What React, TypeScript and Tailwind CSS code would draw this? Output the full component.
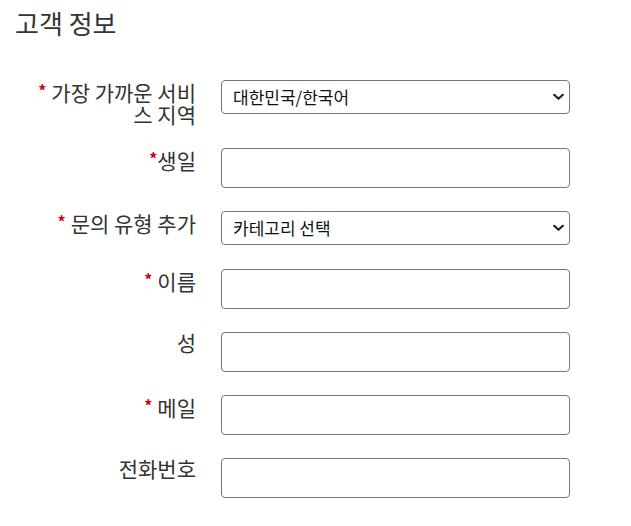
import React from "react";

const font = { fontFamily: '"Noto Sans CJK KR", "Noto Sans", sans-serif' };

function Chevron() {
  return (
    <svg width="11" height="7" viewBox="0 0 11 7" className="pointer-events-none absolute right-[6px] top-1/2 -translate-y-1/2">
      <path d="M1.2 1.2 L5.5 5.3 L9.8 1.2" fill="none" stroke="#222" strokeWidth="2.2" strokeLinecap="round" strokeLinejoin="round" />
    </svg>
  );
}

function Row({ label, req, tight, select, children }: { label: React.ReactNode; req?: boolean; tight?: boolean; select?: boolean; children: React.ReactNode }) {
  return (
    <div className={`flex items-start ${select ? "mb-[24px]" : "mb-[23px]"}`}>
      <div className="w-[170px] shrink-0 text-right text-[21px] leading-[22px] text-[#333] mt-[-1px]">
        {req && (
          <span className={`text-[#d0021b] text-[16px] align-[4px] font-bold ${tight ? "mr-0" : "mr-[5px]"}`}>*</span>
        )}
        {label}
      </div>
      <div className="ml-[25px] w-[349px]">{children}</div>
    </div>
  );
}

function TextBox() {
  return <input type="text" className="block w-full h-[40px] rounded-[4px] border border-[#767676] bg-white px-3 text-[17px] outline-none" />;
}

function SelectBox({ value }: { value: string }) {
  return (
    <div className="relative">
      <select defaultValue={value} className="block w-full h-[34px] appearance-none rounded-[4px] border border-[#767676] bg-white pl-[11px] pr-6 text-[17px] text-[#111] outline-none">
        <option>{value}</option>
      </select>
      <Chevron />
    </div>
  );
}

export default function App() {
  return (
    <div className="w-[631px] h-[526px] bg-white overflow-hidden pl-[15px] pt-[6px]" style={font}>
      <h2 className="text-[26px] leading-[34px] text-[#333] font-normal mb-[40px]">고객 정보</h2>
      <div className="pl-[11px]">
        <Row label="가장 가까운 서비스 지역" req>
          <SelectBox value="대한민국/한국어" />
        </Row>
        <Row label="생일" req tight>
          <TextBox />
        </Row>
        <Row label="문의 유형 추가" req select>
          <SelectBox value="카테고리 선택" />
        </Row>
        <Row label="이름" req>
          <TextBox />
        </Row>
        <Row label="성">
          <TextBox />
        </Row>
        <Row label="메일" req>
          <TextBox />
        </Row>
        <Row label="전화번호">
          <TextBox />
        </Row>
      </div>
    </div>
  );
}
